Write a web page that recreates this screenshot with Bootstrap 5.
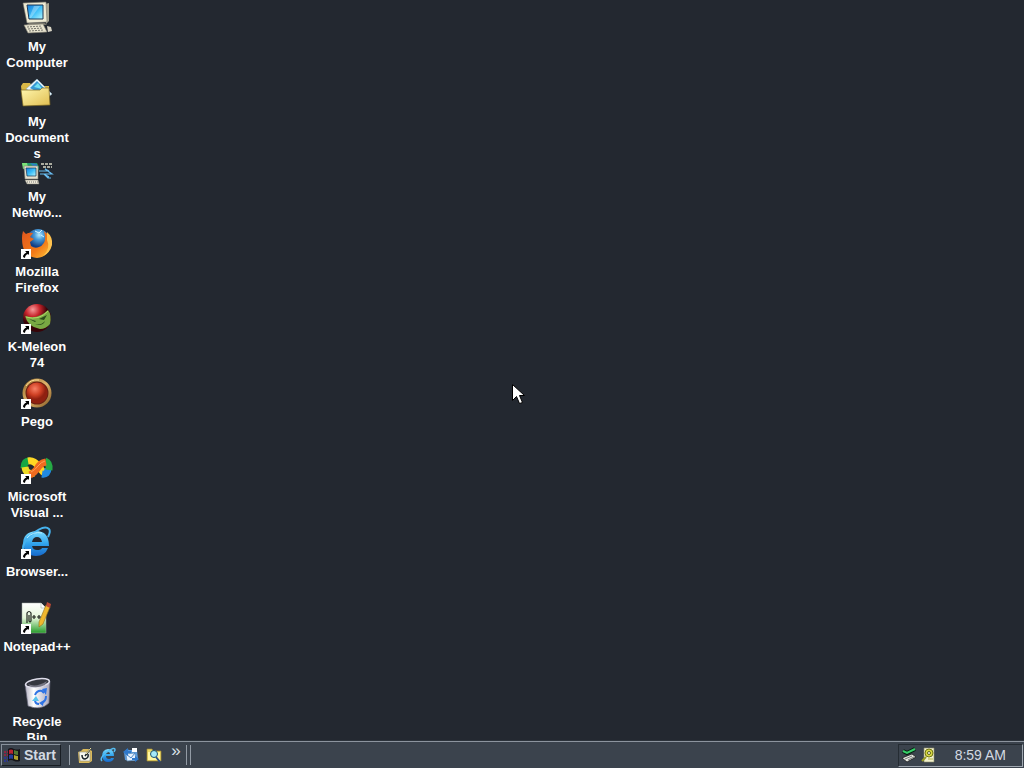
<!DOCTYPE html>
<html lang="en">
<head>
<meta charset="utf-8">
<meta name="viewport" content="width=device-width, initial-scale=1">
<title>Desktop</title>
<link href="https://cdn.jsdelivr.net/npm/bootstrap@5.3.0/dist/css/bootstrap.min.css" rel="stylesheet">
<style>
body{background:#232830;color:#fff;font-family:"Liberation Sans",Arial,sans-serif}
.icons{width:74px}
.shortcut{height:75px;padding-top:2px;color:#fff;font-size:13px;font-weight:700;line-height:16px;text-align:center;text-decoration:none;white-space:nowrap}
.shortcut svg{width:32px;height:32px;margin-bottom:5px;flex:none;overflow:visible}
.pointer-arrow{left:50%;top:50%;width:14px;height:22px}
.taskbar{height:28px;flex:none;background:#3b434d;border-top:1px solid #2c333b;box-shadow:inset 0 1px #8c949e;padding:3px 1px 2px;color:#d3dae2}
.start-btn{width:60px;height:22px;background:#3b434d;border:1px solid;border-color:#88919c #181d23 #181d23 #88919c;color:#d3dae2;font-size:14px;line-height:20px;font-weight:700;padding:0 2px}
.grip{width:5px;height:20px;border-left:1px solid #939ba5;border-right:1px solid #939ba5}
.quick-launch{gap:7px;margin-left:7px}
.quick{width:16px;height:16px;padding:0;border:0;background:none;display:block}
.quick svg,.tray svg{display:block;width:16px;height:16px}
.more-btn{border:0;background:none;color:#dce3ea;padding:0;width:12px;height:22px;font-size:17px;line-height:14px;font-weight:400}
.tray{width:125px;height:23px;border:1px solid;border-color:#252c33 #a1a9b2 #a1a9b2 #252c33;padding:0 16px 0 2px}
.clock{font-size:14px;line-height:22px}
</style>
<script src="https://cdn.jsdelivr.net/npm/bootstrap@5.3.0/dist/js/bootstrap.bundle.min.js"></script>
</head>
<body class="vh-100 d-flex flex-column overflow-hidden">
<svg width="0" height="0" class="position-absolute" aria-hidden="true">
<defs>
<symbol id="arrow" viewBox="0 0 10 10"><path fill="#fff" d="M0 0h10v10H0z"/><path fill="#000" d="M4 2h4v4L7 5Q4 6 4 9L2 8Q2 5 5.500 3.500z"/></symbol>
<linearGradient id="screen" x2="1" y2="1"><stop stop-color="#1478d8"/><stop offset=".5" stop-color="#39bdf8"/><stop offset="1" stop-color="#b0f6ff"/></linearGradient>
<linearGradient id="folder" x2="1" y2="1"><stop stop-color="#fff8b0"/><stop offset="1" stop-color="#e0bd50"/></linearGradient>
<radialGradient id="globe" cx=".55" cy=".25"><stop stop-color="#b8edff"/><stop offset=".4" stop-color="#489bd8"/><stop offset="1" stop-color="#123e85"/></radialGradient>
<linearGradient id="fox" x2="1" y2="1"><stop stop-color="#df551e"/><stop offset=".6" stop-color="#f27a18"/><stop offset="1" stop-color="#ffc73b"/></linearGradient>
<radialGradient id="redball" cx=".4" cy=".3"><stop stop-color="#f78065"/><stop offset=".6" stop-color="#cf4024"/><stop offset="1" stop-color="#8f2010"/></radialGradient>
<radialGradient id="melon" cx=".35" cy=".2"><stop stop-color="#f59999"/><stop offset=".5" stop-color="#c8242c"/><stop offset="1" stop-color="#380408"/></radialGradient>
<linearGradient id="ring" x2="1" y2="1"><stop stop-color="#9a702d"/><stop offset=".5" stop-color="#dfb46c"/><stop offset="1" stop-color="#8a6028"/></linearGradient>
<linearGradient id="ie" x2="0" y2="1"><stop stop-color="#7bdcff"/><stop offset=".5" stop-color="#32a5ed"/><stop offset="1" stop-color="#1769cb"/></linearGradient>
<linearGradient id="bin"><stop stop-color="#b3b2c2"/><stop offset=".35" stop-color="#fff"/><stop offset="1" stop-color="#a7a5bb"/></linearGradient>
<linearGradient id="page" x2="0" y2="1"><stop stop-color="#fff"/><stop offset=".5" stop-color="#e4f6d8"/><stop offset="1" stop-color="#269b29"/></linearGradient>
</defs></svg>

<main class="flex-grow-1 overflow-hidden">
<nav class="icons d-flex flex-column" aria-label="Desktop shortcuts">
<a href="#" class="shortcut d-flex flex-column align-items-center"><svg viewBox="0 0 32 32"><path fill="#aaa796" d="M24 2l4-1v18l-3 3z"/><path fill="#eeead3" stroke="#77756b" stroke-width=".6" d="M2 1l23-1 1 20-20 1z"/><path fill="url(#screen)" stroke="#1c3858" d="M6 3h16v14H8z"/><path fill="#fff" opacity=".3" d="M13 4h6l-9 12H8z"/><path fill="#77766c" d="M8 21h16l2 2H6z"/><path fill="#e8e4cf" stroke="#858273" stroke-width=".6" d="M3 23l19-1 4 8-19 1z"/><path stroke="#77766d" stroke-dasharray="2 1" d="M6 25l15-1M7 27l15-1M8 29l15-1"/><path fill="#d9d4c5" d="M26 24l4 1 1 4-4 1z"/></svg><span>My<br>Computer</span></a>
<a href="#" class="shortcut d-flex flex-column align-items-center"><svg viewBox="0 0 32 32"><path fill="#d9b746" d="M0 9l2-3h7l2 3h17v18H2z"/><path fill="#edf9ff" stroke="#91aebe" stroke-width=".6" d="M5 12L16 2l15 15-8 6z"/><path fill="#3699d5" d="M9 11l7-7 8 8-6 4z"/><path fill="#72e1f2" d="M13 10l4-4 4 6z"/><path fill="url(#folder)" stroke="#796420" stroke-width=".7" d="M0 13h19l2-2h7l1 17-27 1z"/></svg><span>My<br>Document<br>s</span></a>
<a href="#" class="shortcut d-flex flex-column align-items-center"><svg viewBox="0 0 32 32"><path fill="#269a69" d="M1 11h15l2 4-1 5H4z"/><path fill="#7ce277" d="M1 11h5l1 4-5 2z"/><path fill="#277fc3" d="M9 11l7 1v6z"/><path fill="#e4e1cf" stroke="#7f7e73" stroke-width=".6" d="M3 14h14v13H4z"/><path fill="url(#screen)" stroke="#173552" stroke-width=".7" d="M5 16h10v8H6z"/><path fill="#eee9d8" stroke="#77766c" stroke-width=".5" d="M4 28h13l1 4H6z"/><path stroke="#777" stroke-dasharray="1 1" d="M6 30h11"/><path fill="none" stroke="#d9d7c5" stroke-width="1.500" stroke-dasharray="3 1" d="M20 12h11M22 15h9"/><path fill="none" stroke="#69bdf1" stroke-width="1.200" d="M18 19h10l-4-2 7 5h-8l5 3M19 22h4l4 4h3"/></svg><span>My<br>Netwo...</span></a>
<a href="#" class="shortcut d-flex flex-column align-items-center"><svg viewBox="0 0 32 32"><circle cx="17" cy="14" r="12" fill="url(#globe)"/><path fill="url(#fox)" d="M2 4l3 3q3-2 7-1l-3 4 4 2-4 3 1 4q4 3 8 1 7-3 6-11l-1-5q8 6 7 15Q27 30 16 31 5 30 2 20 0 11 2 4z"/><path fill="#ffc24e" d="M26 5q6 5 5 13-2 8-9 11 8-8 4-16z"/><path stroke="#d6f5ff" fill="none" d="M14 4l4 2 3-3M20 8l3 2"/><use href="#arrow" x="0" y="22" width="10" height="10"/></svg><span>Mozilla<br>Firefox</span></a>
<a href="#" class="shortcut d-flex flex-column align-items-center"><svg viewBox="0 0 32 32"><circle cx="16" cy="16" r="14" fill="url(#melon)"/><path fill="#79a943" d="M4 14q13 4 23-6 4 5 2 14-4 5-10 5Q7 25 4 14z"/><path fill="#294b1b" d="M8 17l7 2-1 1zM18 17l8-4-3 5zM12 22q8 2 12-3-2 6-12 3z"/><path stroke="#b2d869" fill="none" d="M5 15q13 4 22-6"/><use href="#arrow" x="0" y="22" width="10" height="10"/></svg><span>K-Meleon<br>74</span></a>
<a href="#" class="shortcut d-flex flex-column align-items-center"><svg viewBox="0 0 32 32"><circle cx="16" cy="16" r="13" fill="#6b2112" stroke="url(#ring)" stroke-width="3"/><circle cx="16" cy="16" r="10.500" fill="url(#redball)"/><path fill="none" stroke="#ffe09a" d="M5 9q4-7 13-6"/><use href="#arrow" x="0" y="22" width="10" height="10"/></svg><span>Pego</span></a>
<a href="#" class="shortcut d-flex flex-column align-items-center"><svg viewBox="0 0 32 32"><g fill="none" stroke-width="7"><path stroke="#15a744" d="M9 9q-6-1-6 7"/><path stroke="#eedb25" d="M4 15q1 8 9 6"/><path stroke="#ffd724" d="M7 9q6-1 10 5l6 7"/><path stroke="#2189e1" d="M21 22q6 1 6-6"/><path stroke="#25aa44" d="M28 18q1-7-4-9"/><path stroke="#ef6b20" d="M9 23q4-2 7-6 3-6 9-7"/></g><path stroke="#ff9f55" fill="none" d="M10 20q4-2 7-6 3-4 7-5"/><use href="#arrow" x="0" y="22" width="10" height="10"/></svg><span>Microsoft<br>Visual ...</span></a>
<a href="#" class="shortcut d-flex flex-column align-items-center"><svg viewBox="0 0 32 32"><path fill="url(#ie)" fill-rule="evenodd" d="M2 17Q2 5 15 4q13 0 13 15H11q1 4 5 4 4 0 5-2h6q-3 8-12 8Q4 29 2 17zm9-2h10q-1-5-5-5-4 0-5 5z"/><path fill="none" stroke="#46b3ef" stroke-width="2" d="M2 23Q1 16 9 9 23-3 28 2q2 2-1 8"/><path fill="none" stroke="#b5edff" d="M6 11q6-7 15-5"/><use href="#arrow" x="0" y="22" width="10" height="10"/></svg><span>Browser...</span></a>
<a href="#" class="shortcut d-flex flex-column align-items-center"><svg viewBox="0 0 32 32"><path fill="url(#page)" stroke="#a0aaa0" stroke-width=".5" d="M1 1h19l5 5v25H1z"/><path fill="#fff" stroke="#9ba69b" stroke-width=".5" d="M20 1v5h5"/><path fill="#efb72e" stroke="#92711b" stroke-width=".6" d="M25 3l4 2-7 17-4 3v-5z"/><path fill="#bc4a35" d="M26 0l4 2-1 4-4-2z"/><path fill="none" stroke="#20251f" stroke-width="1.200" d="M6 21V11q2-3 4 0v8q-1 2-2 0v-6M11 15h4M13 13v4M16 15h4M18 13v4"/><use href="#arrow" x="0" y="22" width="10" height="10"/></svg><span>Notepad++</span></a>
<a href="#" class="shortcut d-flex flex-column align-items-center"><svg viewBox="0 0 32 32"><path fill="url(#bin)" stroke="#67677a" stroke-width=".7" d="M4 7q12 5 25-3l-1 22q-8 8-21 3z"/><ellipse cx="16.500" cy="6" rx="12" ry="4" fill="#34363f" stroke="#deddea" stroke-width="1.500" transform="rotate(-9 16 6)"/><path fill="#777785" d="M7 7q8 4 19-3l-2 4q-9 4-15 1z"/><g fill="none" stroke="#2e73e5" stroke-width="2"><path d="M14 18q2-5 7-4l2 2"/><path d="M25 19q0 5-4 7"/><path d="M18 27q-4 0-4-4"/></g><path fill="#2e73e5" d="M21 12l5-1-1 7zM22 29l-4-3 5-3z"/><path fill="#58c2ec" d="M11 24l4-5 3 5z"/></svg><span>Recycle<br>Bin</span></a>
</nav>
</main>

<svg class="pointer-arrow position-absolute" viewBox="0 0 14 22" aria-hidden="true"><path fill="#fff" stroke="#000" d="M.5.5v16l4-4 3 7 3-1-3-7h5z"/></svg>

<footer class="taskbar d-flex align-items-center">
<button class="start-btn d-flex align-items-center gap-1" type="button"><svg width="16" height="16" viewBox="0 0 16 16"><path fill="#151519" d="M4 2q3-2 6 0 3 1 6 0v12q-3 1-6 0-3-2-6 0z"/><path fill="#b92532" d="M5 3q2-1 4 0v4q-2-1-4 0z"/><path fill="#527833" d="M10 3q2 1 4 1v4q-2 0-4-1z"/><path fill="#263e9c" d="M5 8q2-1 4 0v4q-2-1-4 0z"/><path fill="#b2a22d" d="M10 8q2 1 4 1v4q-2 0-4-1z"/><path stroke="#8c2544" stroke-width="2" stroke-dasharray="2 1" d="M0 5h4M0 8h4"/><path stroke="#2d388e" stroke-width="2" stroke-dasharray="2 1" d="M0 11h4M0 14h4"/></svg><span>Start</span></button>
<span class="grip ms-1 border-start-0"></span>
<div class="quick-launch d-flex align-items-center">
<button class="quick" type="button" aria-label="Show Desktop"><svg viewBox="0 0 16 16"><path fill="#d9b95c" d="M1 5l3-1 2-2h6l3 2v10l-3 2H2z"/><path fill="#f7f7ee" stroke="#8c8b7d" stroke-width=".6" d="M2 5h11v9H3z"/><path fill="none" stroke="#172027" stroke-width="1.500" d="M5 8q0 4 3 4 4-1 3-5M8 9l6-8"/><path stroke="#fff1ad" d="M9 7l5-6"/></svg></button>
<button class="quick" type="button" aria-label="Internet Explorer"><svg viewBox="0 0 16 16"><path fill="url(#ie)" fill-rule="evenodd" d="M2 9q0-6 6-7 6 0 6 7H6q0 3 3 3 2 0 2-1h3q-1 4-6 4-5 0-6-6zm4-2h4q0-2-2-2T6 7z"/><path stroke="#55bbef" fill="none" stroke-width="1.500" d="M2 14q-3-3 5-9 8-6 8-2l-1 2"/></svg></button>
<button class="quick" type="button" aria-label="Outlook Express"><svg viewBox="0 0 16 16"><path fill="#5b9bdc" d="M1 5l3-3 2 1h8l1 9-4 2-9-1z"/><path fill="#e5f2ff" stroke="#5989b8" stroke-width=".7" d="M3 7l9-1 1 7-9 1z"/><path fill="none" stroke="#4a87c8" d="M3 7l5 4 4-5"/><path fill="#fff" d="M9 1h5v4H9z"/><path fill="#2f78ca" d="M0 5l5-4v3h3v2H5v3zM16 12l-4-3v2H9v2h3v2z"/></svg></button>
<button class="quick" type="button" aria-label="Search"><svg viewBox="0 0 16 16"><path fill="#eddc67" stroke="#a28830" stroke-width=".7" d="M1 2h5l1 2h8v10H1z"/><path fill="#fff7a1" d="M2 5h12v8H2z"/><circle cx="8" cy="7" r="3.500" fill="#a4eafa" stroke="#1d536b"/><path stroke="#2c4d82" stroke-width="2" d="M10 10l4 5"/></svg></button>
</div>
<button class="more-btn ms-2 d-flex align-items-start justify-content-center" type="button" aria-label="More buttons">»</button>
<span class="grip ms-1"></span>
<div class="tray d-flex align-items-center ms-auto">
<svg viewBox="0 0 16 16"><path fill="#e4e6df" stroke="#111" stroke-width=".7" d="M1 11l10-4 4 3-9 5z"/><path stroke="#777a79" d="M4 12l7-3M7 13l6-3"/><path fill="none" stroke="#061c0f" stroke-width="4" d="M2 4l4 2 8-4"/><path fill="none" stroke="#36cf67" stroke-width="2" d="M2 4l4 2 8-4"/></svg>
<svg class="ms-1" viewBox="0 0 16 16"><path fill="#f2f1cc" stroke="#8b8b68" stroke-width=".6" d="M3 1h10v14H3z"/><circle cx="8" cy="6" r="4" fill="#d7d843" stroke="#727715"/><circle cx="8" cy="6" r="1.500" fill="#fff" stroke="#606414"/><path stroke="#999c24" stroke-width="2" d="M5 10l-4 4"/><path stroke="#b0b342" d="M7 12h5"/></svg>
<time class="clock ms-auto">8:59 AM</time>
</div>
</footer>
</body>
</html>
